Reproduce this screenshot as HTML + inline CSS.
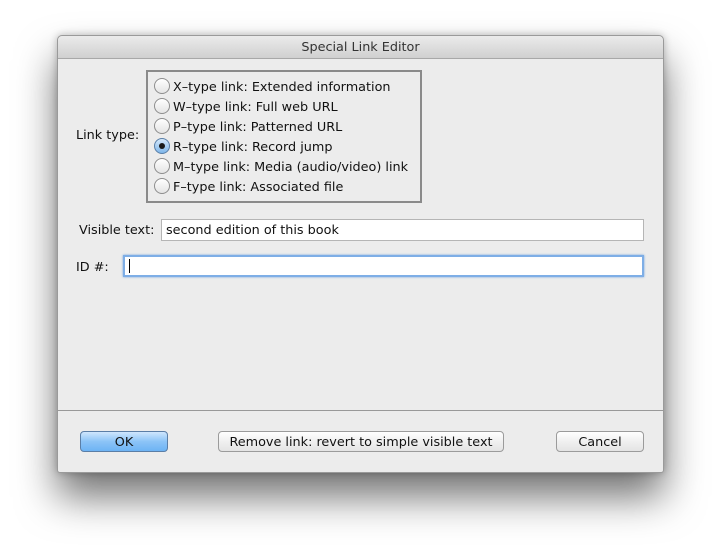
<!DOCTYPE html>
<html><head><style>
*{margin:0;padding:0;box-sizing:border-box}
body{width:721px;height:553px;background:#fff;font-family:"DejaVu Sans","Liberation Sans",sans-serif;font-size:12.8px;color:#111;position:relative;overflow:hidden}
.win{position:absolute;left:57px;top:35px;width:607px;height:438px;background:#ececec;border:1px solid #9a9a9a;border-radius:5px 5px 3px 3px;box-shadow:0 24px 40px rgba(0,0,0,.55),0 0 8px rgba(0,0,0,.25)}
.title{height:23px;background:linear-gradient(#ebebeb,#d0d0d0);border-bottom:1px solid #a8a8a8;border-radius:5px 5px 0 0;text-align:center;line-height:24px;color:#333}
.a{position:absolute;white-space:nowrap}
.box{left:88px;top:34px;width:276px;height:133px;border:2px solid #8a8a8a}
.r{position:absolute;left:6px;height:20px;line-height:21px;white-space:nowrap}
.r i{position:absolute;left:0;top:2px;width:16px;height:16px;border-radius:50%;border:1px solid #8e8e8e;background:linear-gradient(#fff,#e4e4e4)}
.r span{position:absolute;left:19px;top:1px}
.r i.on{background:linear-gradient(#d6e9fb,#7eb6ea);border-color:#5a7fa8}
.r i.on:after{content:"";position:absolute;left:4px;top:4px;width:6px;height:6px;border-radius:50%;background:#1a1a1a}
.f{background:#fff;border:1px solid #b5b5b5;height:22px;line-height:22px;padding-left:4px}
.btn{position:absolute;top:395px;height:21px;border:1px solid #9b9b9b;border-radius:4px;background:linear-gradient(#fff,#f0f0f0 50%,#e4e4e4);text-align:center;line-height:21px}
</style></head><body>
<div class="win">
<div class="title">Special Link Editor</div>
<div class="a" style="left:18px;top:92px">Link type:</div>
<div class="a box">
<div class="r" style="top:4px"><i></i><span>X–type link: Extended information</span></div>
<div class="r" style="top:24px"><i></i><span>W–type link: Full web URL</span></div>
<div class="r" style="top:44px"><i></i><span>P–type link: Patterned URL</span></div>
<div class="r" style="top:64px"><i class="on"></i><span>R–type link: Record jump</span></div>
<div class="r" style="top:84px"><i></i><span>M–type link: Media (audio/video) link</span></div>
<div class="r" style="top:104px"><i></i><span>F–type link: Associated file</span></div>
</div>
<div class="a" style="left:21px;top:187px">Visible text:</div>
<div class="a f" style="left:103px;top:183px;width:483px">second edition of this book</div>
<div class="a" style="left:18px;top:224px">ID #:</div>
<div class="a f" style="left:65px;top:219px;width:521px;border:2px solid #7eaee6;box-shadow:0 0 2px #6aa0e0;line-height:18px"><span style="display:inline-block;width:1px;height:14px;background:#000;vertical-align:middle"></span></div>
<div class="a" style="left:0;top:374px;width:605px;height:1px;background:#999"></div>
<div class="btn" style="left:22px;width:88px;background:linear-gradient(#cfe6fd,#8cc4f7 50%,#6db3f4);border-color:#5b7ea6">OK</div>
<div class="btn" style="left:160px;width:286px">Remove link: revert to simple visible text</div>
<div class="btn" style="left:498px;width:88px">Cancel</div>
</div>
</body></html>
